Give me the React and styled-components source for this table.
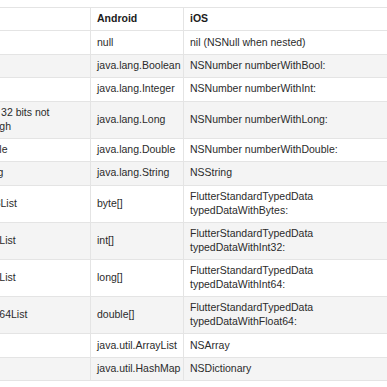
import React from 'react'
import styled, { createGlobalStyle } from 'styled-components'

const GlobalStyle = createGlobalStyle`
  html, body {
    margin: 0;
    padding: 0;
    background: #ffffff;
  }
  body {
    font-family: "Liberation Sans", Arial, sans-serif;
    color: #2b2b2b;
  }
`

const rows = [
  ['null', 'null', 'nil (NSNull when nested)'],
  ['bool', 'java.lang.Boolean', 'NSNumber numberWithBool:'],
  ['int', 'java.lang.Integer', 'NSNumber numberWithInt:'],
  ['int, if 32 bits not enough', 'java.lang.Long', 'NSNumber numberWithLong:'],
  ['double', 'java.lang.Double', 'NSNumber numberWithDouble:'],
  ['String', 'java.lang.String', 'NSString'],
  ['Uint8List', 'byte[]', 'FlutterStandardTypedData typedDataWithBytes:'],
  ['Int32List', 'int[]', 'FlutterStandardTypedData typedDataWithInt32:'],
  ['Int64List', 'long[]', 'FlutterStandardTypedData typedDataWithInt64:'],
  ['Float64List', 'double[]', 'FlutterStandardTypedData typedDataWithFloat64:'],
  ['List', 'java.util.ArrayList', 'NSArray'],
  ['Map', 'java.util.HashMap', 'NSDictionary'],
]

// the table is wider than the viewport and scrolled a bit to the right
const Page = styled.div`
  width: 387px;
  height: 387px;
  overflow: hidden;
  padding-top: 7px;
  box-sizing: border-box;
`

const Table = styled.table`
  margin-left: -31px;
  width: 434px;
  table-layout: fixed;
  border-collapse: collapse;
  font-size: 10.5px;
  line-height: 13.8px;
`

const Col = styled.col`
  width: ${p => p.$w}px;
`

const Head = styled.th`
  text-align: left;
  font-weight: 700;
  color: #1c1c1c;
  padding: 4.3px 6px;
  border: 1px solid #e4e4e4;
`

const Row = styled.tr`
  background: ${p => (p.$striped ? '#f4f4f4' : '#ffffff')};
`

const Cell = styled.td`
  padding: 4.3px 6px;
  border: 1px solid #e4e4e4;
  vertical-align: middle;
`

export default function App() {
  return (
    <Page>
      <GlobalStyle />
      <Table>
        <colgroup>
          <Col $w={121} />
          <Col $w={93} />
          <Col $w={220} />
        </colgroup>
        <thead>
          <tr>
            <Head>Dart</Head>
            <Head>Android</Head>
            <Head>iOS</Head>
          </tr>
        </thead>
        <tbody>
          {rows.map((r, i) => (
            <Row key={r[0] + i} $striped={i % 2 === 1}>
              <Cell>{r[0]}</Cell>
              <Cell>{r[1]}</Cell>
              <Cell>{r[2]}</Cell>
            </Row>
          ))}
        </tbody>
      </Table>
    </Page>
  )
}
